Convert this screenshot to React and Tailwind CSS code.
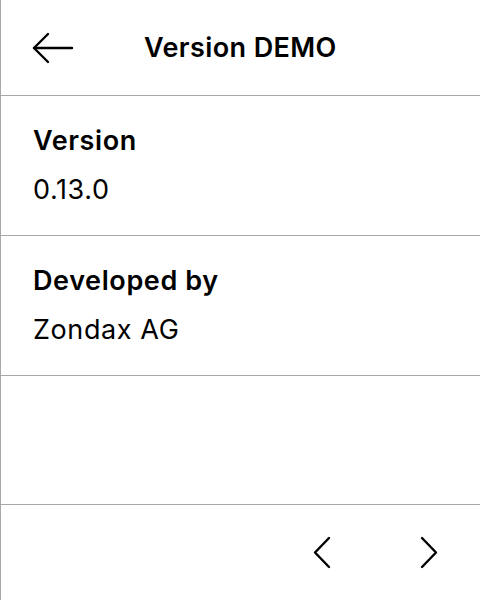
const INFO = [
  { label: 'Version', value: '0.13.0' },
  { label: 'Developed by', value: 'Zondax AG' },
];

function BackArrow() {
  return (
    <svg width="42" height="34" viewBox="0 0 42 34" fill="none" stroke="black" strokeWidth="2.4" strokeLinecap="round" strokeLinejoin="round">
      <path d="M2 17H40" />
      <path d="M16 3L2 17L16 31" />
    </svg>
  );
}

function Chevron({ dir }) {
  return (
    <svg width="20" height="33" viewBox="0 0 20 33" fill="none" stroke="black" strokeWidth="2.4" strokeLinecap="round" strokeLinejoin="round">
      {dir === 'left' ? <path d="M17 2L3 16.5L17 31" /> : <path d="M3 2L17 16.5L3 31" />}
    </svg>
  );
}

export default function App() {
  return (
    <div className="flex h-[600px] w-[480px] flex-col border-l border-[#a8a8a8] bg-white text-black font-['Inter',sans-serif]">
      <header className="flex h-[96px] shrink-0 items-center border-b border-[#a8a8a8] pl-[31px]">
        <BackArrow />
        <h1 className="ml-[70px] text-[27px] font-semibold leading-[32px] tracking-[0.4px]">Version DEMO</h1>
      </header>

      {INFO.map((item) => (
        <section
          key={item.label}
          className="flex h-[140px] shrink-0 flex-col justify-center gap-[21px] border-b border-[#a8a8a8] px-[32px]"
        >
          <div className="text-[27px] font-semibold leading-[28px] tracking-[0.6px]">{item.label}</div>
          <div className="text-[27px] leading-[28px] tracking-[0.6px]">{item.value}</div>
        </section>
      ))}

      <div className="flex-1" />

      <footer className="flex h-[96px] shrink-0 items-center justify-end gap-[87px] border-t border-[#a8a8a8] pr-[41px]">
        <Chevron dir="left" />
        <Chevron dir="right" />
      </footer>
    </div>
  );
}
